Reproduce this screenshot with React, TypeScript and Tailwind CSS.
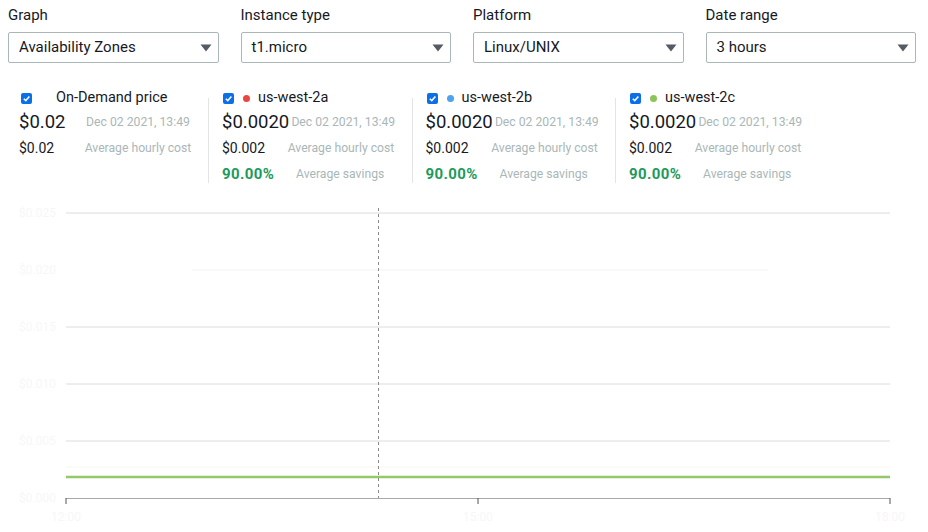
import React from "react";

const filters = [
  { label: "Graph", value: "Availability Zones" },
  { label: "Instance type", value: "t1.micro" },
  { label: "Platform", value: "Linux/UNIX" },
  { label: "Date range", value: "3 hours" },
];

const zones = [
  { name: "us-west-2a", dot: "bg-[#e8473f]" },
  { name: "us-west-2b", dot: "bg-[#4da3ec]" },
  { name: "us-west-2c", dot: "bg-[#8cc45a]" },
];

const Check = () => (
  <span className="flex items-center justify-center w-[11px] h-[11px] rounded-[2px] bg-[#0b6fe8]">
    <svg width="9" height="9" viewBox="0 0 10 10">
      <path d="M2 5.2 L4.2 7.3 L8.2 2.8" fill="none" stroke="white" strokeWidth="1.7" />
    </svg>
  </span>
);

const Select = ({ value }: { value: string }) => (
  <div className="flex items-center justify-between h-[31px] border border-[#aab7b8] rounded-[2px] pl-[10px] pr-[6px] text-[15px]">
    <span>{value}</span>
    <svg width="12" height="8" viewBox="0 0 12 8">
      <path d="M0.5 0.5 H11.5 L6 7.5 Z" fill="#545b64" />
    </svg>
  </div>
);

const Row = ({ left, right, leftClass }: { left: string; right: string; leftClass: string }) => (
  <div className="flex items-center">
    <span className={`min-w-[64px] whitespace-nowrap ${leftClass}`}>{left}</span>
    <span className="w-[110px] text-center text-[12.2px] text-[#aab7b8] whitespace-nowrap">{right}</span>
  </div>
);

const Chart = () => {
  const grid = [213, 270, 327, 384, 441];
  const yLabels = ["$0.025", "$0.020", "$0.015", "$0.010", "$0.005", "$0.000"];
  const ticks = [
    { x: 66, t: "12:00" },
    { x: 478, t: "15:00" },
    { x: 890, t: "18:00" },
  ];
  return (
    <svg width="928" height="335" viewBox="0 197 928 335" className="block">
      {grid.map((y, i) =>
        i === 1 ? (
          <line key={y} x1="192" x2="768" y1={y} y2={y} stroke="#f2f2f2" strokeWidth="1" />
        ) : (
          <line key={y} x1="66" x2="890" y1={y} y2={y} stroke="#dcdcdc" strokeWidth="1" />
        )
      )}
      {yLabels.map((l, i) => (
        <text key={l} x="56" y={213 + i * 57 + 4} textAnchor="end" fontSize="12" fill="#f7f7f7" fontFamily="Roboto, sans-serif">
          {l}
        </text>
      ))}
      <line x1="66" x2="890" y1="467" y2="467" stroke="#fbf7ea" strokeWidth="1" />
      <line x1="66" x2="890" y1="477" y2="477" stroke="#94c86a" strokeWidth="2.5" />
      <line x1="378.5" x2="378.5" y1="208" y2="498" stroke="#8a8a8a" strokeWidth="1" strokeDasharray="3 3" />
      <line x1="66" x2="890" y1="498.5" y2="498.5" stroke="#a9a9a9" strokeWidth="1" />
      {ticks.map((t) => (
        <g key={t.t}>
          <line x1={t.x} x2={t.x} y1="498" y2="504" stroke="#555" strokeWidth="1" />
          <text x={t.x} y="521" textAnchor="middle" fontSize="12" fill="#f7f7f7" fontFamily="Roboto, sans-serif">
            {t.t}
          </text>
        </g>
      ))}
    </svg>
  );
};

export default function App() {
  return (
    <div className="w-[928px] h-[532px] overflow-hidden bg-white text-[#16191f] font-['Roboto',sans-serif]">
      {/* filters */}
      <div className="grid grid-cols-4 gap-x-[22px] pl-2 pr-3 pt-[5px]">
        {filters.map((f) => (
          <div key={f.label}>
            <div className="text-[15px] leading-[20px] mb-[7px]">{f.label}</div>
            <Select value={f.value} />
          </div>
        ))}
      </div>

      {/* legend */}
      <div className="flex pl-[5px] mt-[25px]">
        <div className="w-[203px] pl-[14px]">
          <div className="flex items-center h-[20px] text-[14.5px]">
            <span className="ml-[2px]"><Check /></span>
            <span className="ml-[24px]">On-Demand price</span>
          </div>
          <div className="flex items-center h-[24px] mt-[2px]">
            <span className="min-w-[64px] text-[18.5px] leading-[24px]">$0.02</span>
            <span className="w-[110px] text-center text-[12.2px] text-[#aab7b8]">Dec 02 2021, 13:49</span>
          </div>
          <div className="h-[20px] mt-[4px]">
            <Row left="$0.02" right="Average hourly cost" leftClass="text-[14px]" />
          </div>
        </div>
        {zones.map((z) => (
          <div key={z.name} className="w-[203.5px] pl-[13px] border-l border-[#e2e4e6] mt-[10px] h-[85px]">
            <div className="flex items-center h-[20px] text-[14.5px] -mt-[10px]">
              <span className="ml-[1px]"><Check /></span>
              <span className={`ml-[9px] w-[7px] h-[7px] rounded-full ${z.dot}`} />
              <span className="ml-[8px]">{z.name}</span>
            </div>
            <div className="flex items-center h-[24px] mt-[2px]">
              <span className="min-w-[64px] text-[18.5px] leading-[24px]">$0.0020</span>
              <span className="w-[108px] text-center text-[12.2px] text-[#aab7b8] whitespace-nowrap">Dec 02 2021, 13:49</span>
            </div>
            <div className="h-[20px] mt-[4px]">
              <Row left="$0.002" right="Average hourly cost" leftClass="text-[14px]" />
            </div>
            <div className="h-[20px] mt-[5px]">
              <div className="flex items-center">
                <span className="min-w-[74px] text-[15px] font-bold tracking-[0.4px] text-[#1d9a5b]">90.00%</span>
                <span className="text-[12.2px] text-[#aab7b8] whitespace-nowrap">Average savings</span>
              </div>
            </div>
          </div>
        ))}
      </div>

      <div className="mt-[14px]">
        <Chart />
      </div>
    </div>
  );
}
